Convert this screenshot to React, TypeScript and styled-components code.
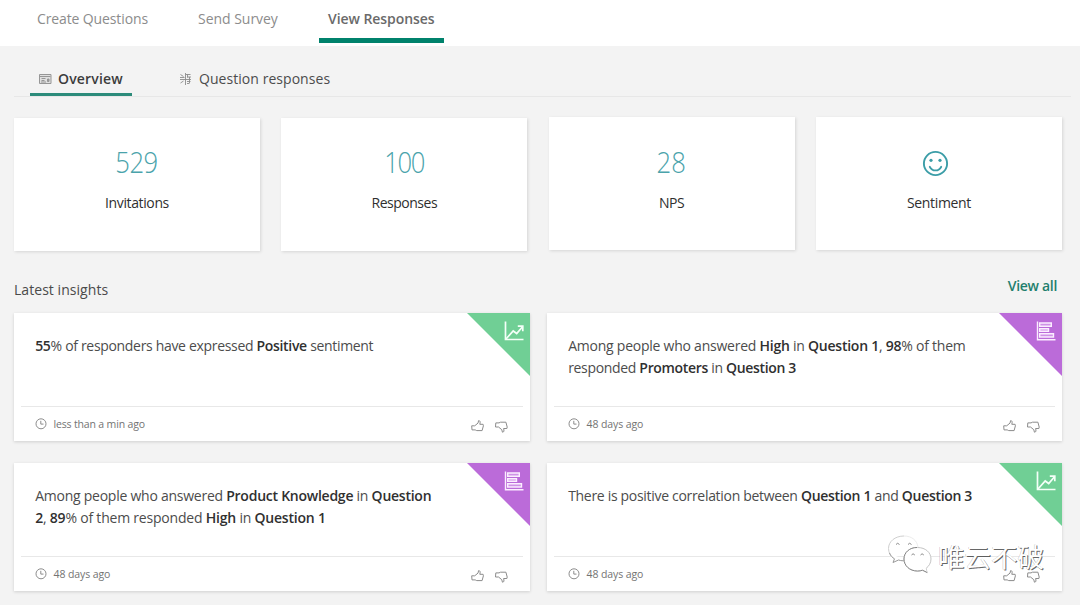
import React from "react";
import styled, { createGlobalStyle } from "styled-components";

const GlobalStyle = createGlobalStyle`
  * { box-sizing: border-box; }
  html, body { margin: 0; padding: 0; background: #f3f3f3; }
  body { font-family: "Open Sans", "Noto Sans", "Noto Sans CJK SC", sans-serif; color: #444; }
`;

const Page = styled.div`
  width: 1080px;
  height: 605px;
  overflow: hidden;
  background: #f3f3f3;
`;

const TopBar = styled.nav`
  display: flex;
  height: 46px;
  padding-left: 28px;
  gap: 32px;
  background: #fff;
`;

const TopTab = styled.div<{ $w: number; $ls: number; $active?: boolean }>`
  width: ${(p) => p.$w}px;
  height: 43px;
  padding: 8px 0 0 9px;
  white-space: nowrap;
  font-size: 14px;
  line-height: 22px;
  letter-spacing: ${(p) => p.$ls}px;
  font-weight: ${(p) => (p.$active ? 600 : 400)};
  color: ${(p) => (p.$active ? "#6a6a6a" : "#8c8c8c")};
  border-bottom: 5px solid ${(p) => (p.$active ? "#00826c" : "transparent")};
`;

const SubNav = styled.nav`
  display: flex;
  height: 51px;
  margin: 0 9px 0 14px;
  padding: 20px 0 0 16px;
  gap: 39px;
  border-bottom: 1px solid #e7e7e7;
`;

const SubTab = styled.div<{ $w: number; $ls: number; $active?: boolean }>`
  display: flex;
  align-items: flex-start;
  width: ${(p) => p.$w}px;
  height: 30px;
  padding: 2px 0 0 8px;
  white-space: nowrap;
  font-size: 14px;
  line-height: 22px;
  letter-spacing: ${(p) => p.$ls}px;
  font-weight: ${(p) => (p.$active ? 600 : 400)};
  color: ${(p) => (p.$active ? "#3c3c3c" : "#4c4c4c")};
  border-bottom: 3px solid ${(p) => (p.$active ? "#2c8b7a" : "transparent")};
  svg { flex: none; margin: 4px 6px 0 0; }
`;

const Stats = styled.section`
  display: grid;
  grid-template-columns: repeat(4, 246px);
  justify-content: space-between;
  width: 1048px;
  margin: 21px 0 0 14px;
`;

const StatCard = styled.div<{ $raised?: boolean }>`
  display: flex;
  flex-direction: column;
  align-items: center;
  height: 133px;
  margin-top: ${(p) => (p.$raised ? -1 : 0)}px;
  padding-top: ${(p) => (p.$raised ? 28 : 27)}px;
  background: #fff;
  box-shadow: 1px 1px 3px rgba(0, 0, 0, 0.12);
`;

const StatNumber = styled.div<{ $ls: number }>`
  height: 36px;
  font-size: 28.5px;
  line-height: 35px;
  font-weight: 300;
  letter-spacing: ${(p) => p.$ls}px;
  color: #4aa3ab;
  transform: scaleX(0.9);
`;

const StatIcon = styled.div`
  height: 36px;
  padding: 5px 7px 0 0;
  svg { display: block; }
`;

const StatLabel = styled.div<{ $ls: number }>`
  margin-top: 11px;
  font-size: 14px;
  line-height: 22px;
  letter-spacing: ${(p) => p.$ls}px;
  color: #2f2f2f;
`;

const InsightsHead = styled.div`
  display: flex;
  justify-content: space-between;
  align-items: flex-start;
  width: 1043px;
  height: 62px;
  margin-left: 14px;
  font-size: 14px;
  line-height: 22px;
`;

const Heading = styled.span`
  padding-top: 28px;
  letter-spacing: 0.05px;
  color: #4a4a4a;
`;

const ViewAll = styled.span`
  padding-top: 24px;
  font-weight: 600;
  letter-spacing: -0.3px;
  color: #1f7f6d;
`;

const Insights = styled.section`
  display: grid;
  grid-template-columns: 516px 515px;
  column-gap: 17px;
  row-gap: 22px;
  margin-left: 14px;
`;

const Card = styled.article`
  position: relative;
  display: flex;
  flex-direction: column;
  height: 128px;
  background: #fff;
  box-shadow: 0 1px 3px rgba(0, 0, 0, 0.15);
`;

const Message = styled.p`
  flex: 1;
  margin: 0;
  padding: 22px 0 0 21.2px;
  font-size: 14px;
  line-height: 22.4px;
  white-space: nowrap;
  color: #4c4c4c;
`;

const Line = styled.span<{ $ls: number }>`
  display: block;
  letter-spacing: ${(p) => p.$ls}px;
  b { font-weight: 600; color: #303030; }
`;

const Footer = styled.footer`
  display: flex;
  align-items: center;
  height: 35px;
  margin: 0 7px;
  padding: 0 14px 1px 14px;
  border-top: 1px solid #e8e8e8;
`;

const Age = styled.span<{ $ls: number }>`
  flex: 1;
  padding-left: 6.5px;
  font-size: 10.5px;
  line-height: 16px;
  letter-spacing: ${(p) => p.$ls}px;
  color: #737373;
`;

const Votes = styled.div`
  display: flex;
  gap: 10px;
  padding-top: 5px;
`;

const Corner = styled.div<{ $tone: string }>`
  position: absolute;
  top: 0;
  right: 0;
  width: 63px;
  height: 63px;
  padding: 8px 0 0 37px;
  background: ${(p) => p.$tone};
  clip-path: polygon(0 0, 100% 0, 100% 100%);
  svg { display: block; }
`;

const Watermark = styled.div`
  position: absolute;
  left: 887px;
  top: 533px;
  display: flex;
  align-items: flex-start;
`;

const WatermarkText = styled.span`
  margin-left: 5px;
  font-family: "Noto Sans CJK SC", sans-serif;
  font-size: 26.5px;
  line-height: 45px;
  font-weight: 400;
  color: #fff;
  text-shadow: 1px 1px 0.5px rgba(0, 0, 0, 0.6), -0.5px 0 0.5px rgba(0, 0, 0, 0.25);
`;

const OverviewIcon = () => (
  <svg width="14" height="14" viewBox="0 0 14 14" fill="none" stroke="#969696">
    <path d="M1.500 2.500h11.500v9H1.500z" fill="#e0e0e0" />
    <path d="M1.500 4.500h11M3.500 6.500h4M3.500 8.500h3M3 10h5" />
    <path d="M9.500 7h1.500v2.500H9.500z" fill="#999" />
  </svg>
);

const ResponsesIcon = () => (
  <svg width="14" height="14" viewBox="0 0 14 14" fill="none" stroke="#8c8c8c" strokeWidth=".9">
    <path d="M6.500 1v12M1.500 2.500l3 2M1 5.500h4.500M1 7.500h11M1.500 11l3-2M7 2.500h4.500M8 5h4M8 9.500h3.500M8 11.500h2.500M8.500 2.500v3M10.500 5v6" />
  </svg>
);

const Smile = () => (
  <svg width="27" height="27" viewBox="0 0 27 27" fill="none" stroke="#3b9da7" strokeWidth="1.900">
    <circle cx="13.500" cy="13.500" r="11.600" />
    <path d="M7.800 16.800a6.300 6.300 0 0 0 11.400 0" strokeLinecap="round" />
    <circle cx="9" cy="10.300" r="1.600" fill="#3b9da7" stroke="none" />
    <circle cx="18" cy="10.300" r="1.600" fill="#3b9da7" stroke="none" />
  </svg>
);

const TrendIcon = () => (
  <svg width="21" height="21" viewBox="0 0 21 21" fill="none" stroke="#f4fff8" strokeWidth="1.700">
    <path d="M1.500 .5v18h18" />
    <path d="M2 18l7.200-8 3.500 2.500L18.300 6M13.800 5.200h5v5" />
  </svg>
);

const BarsIcon = () => (
  <svg width="21" height="21" viewBox="0 0 21 21" fill="none" stroke="#fbeeff" strokeWidth="1.400">
    <path d="M1.500 .5v18.300h18" />
    <path d="M3.700 2h11.600v3.300H3.700zM3.700 7.700h8.800v2.600H3.700zM3.700 12.700h13.800v3.300H3.700z" fill="#cf93e6" />
  </svg>
);

const Clock = () => (
  <svg width="12" height="12" viewBox="0 0 12 12" fill="none" stroke="#8c8c8c">
    <circle cx="6" cy="5.800" r="5" />
    <path d="M5.800 2.800v3.300h2.700" />
  </svg>
);

const Thumb = ({ down }: { down?: boolean }) => (
  <svg width="14" height="14" viewBox="0 0 14 14" fill="none" stroke="#8c8c8c" strokeLinejoin="round">
    <path
      transform={down ? "translate(-.5 14.500) scale(1 -1)" : "translate(-.3 .3)"}
      d="M1 6.500h3l3.300-2.700.6-2.500c1.600 0 1.900 1.400 1.200 3.700h3.300l.3 1.500-1.300 4.800H6l-1.500-.7H1.300z"
    />
  </svg>
);

const WeChat = () => (
  <svg width="46" height="42" viewBox="0 0 46 42" fill="#fff" strokeWidth="1">
    <path d="M17 3C8 3 1.500 8.500 1.500 15.500c0 4.500 2.300 7.500 5.500 9.800" stroke="#cfcfcf" />
    <path d="M17 3c8 0 13 4.500 14 11" stroke="#ececec" />
    <path d="M2.500 20c1.200 3 3 4.500 5 5.800L6 29.500l5.500-2.500c2.500.8 4.500.9 7 .6" stroke="#999" />
    <path d="M30.500 14.500C22.500 14.500 17 19.500 17 26c0 6.500 5.500 12 13.500 12 2 0 3.500-.3 5-.8l4.700 2.300-1.200-4C42 33 44 30 44 26c0-6.500-5.500-11.500-13.500-11.500z" stroke="#c4c4c4" />
    <path d="M30 14.500C22.500 14.500 17 19.500 17 26c0 6.500 5.500 12 13.500 12 2 0 3.500-.3 5-.8l4.700 2.300" stroke="#858585" />
    <path d="M9 11.500q1.500-2.500 3.500 0M21 11.500q1.500-2.500 3.500 0M24.500 22q1.500-2.500 3.300 0M33.500 22q1.500-2.500 3.300 0" fill="none" stroke="#8a8a8a" />
  </svg>
);

type InsightProps = { kind: "trend" | "bars"; age: string; ageSpacing: number; children: React.ReactNode };

const Insight = ({ kind, age, ageSpacing, children }: InsightProps) => (
  <Card>
    <Message>{children}</Message>
    <Footer>
      <Clock />
      <Age $ls={ageSpacing}>{age}</Age>
      <Votes><Thumb /><Thumb down /></Votes>
    </Footer>
    <Corner $tone={kind === "trend" ? "#70cf95" : "#bb6bd9"}>
      {kind === "trend" ? <TrendIcon /> : <BarsIcon />}
    </Corner>
  </Card>
);

export default function App() {
  return (
    <Page>
      <GlobalStyle />
      <TopBar>
        <TopTab $w={129} $ls={-0.12}>Create Questions</TopTab>
        <TopTab $w={98} $ls={-0.03}>Send Survey</TopTab>
        <TopTab $w={125} $ls={-0.06} $active>View Responses</TopTab>
      </TopBar>
      <SubNav>
        <SubTab $w={102} $ls={0.17} $active><OverviewIcon />Overview</SubTab>
        <SubTab $w={180} $ls={0.05}><ResponsesIcon />Question responses</SubTab>
      </SubNav>
      <Stats>
        <StatCard><StatNumber $ls={-0.6}>529</StatNumber><StatLabel $ls={-0.38}>Invitations</StatLabel></StatCard>
        <StatCard><StatNumber $ls={-1.5}>100</StatNumber><StatLabel $ls={-0.48}>Responses</StatLabel></StatCard>
        <StatCard $raised><StatNumber $ls={-0.1}>28</StatNumber><StatLabel $ls={-0.4}>NPS</StatLabel></StatCard>
        <StatCard $raised><StatIcon><Smile /></StatIcon><StatLabel $ls={-0.35}>Sentiment</StatLabel></StatCard>
      </Stats>
      <InsightsHead>
        <Heading>Latest insights</Heading>
        <ViewAll>View all</ViewAll>
      </InsightsHead>
      <Insights>
        <Insight kind="trend" age="less than a min ago" ageSpacing={-0.16}>
          <Line $ls={-0.32}><b>55</b>% of responders have expressed <b>Positive</b> sentiment</Line>
        </Insight>
        <Insight kind="bars" age="48 days ago" ageSpacing={-0.1}>
          <Line $ls={-0.24}>Among people who answered <b>High</b> in <b>Question 1</b>, <b>98</b>% of them</Line>
          <Line $ls={-0.33}>responded <b>Promoters</b> in <b>Question 3</b></Line>
        </Insight>
        <Insight kind="bars" age="48 days ago" ageSpacing={-0.1}>
          <Line $ls={-0.25}>Among people who answered <b>Product Knowledge</b> in <b>Question</b></Line>
          <Line $ls={-0.21}><b>2</b>, <b>89</b>% of them responded <b>High</b> in <b>Question 1</b></Line>
        </Insight>
        <Insight kind="trend" age="48 days ago" ageSpacing={-0.1}>
          <Line $ls={-0.31}>There is positive correlation between <b>Question 1</b> and <b>Question 3</b></Line>
        </Insight>
      </Insights>
      <Watermark><WeChat /><WatermarkText>唯云不破</WatermarkText></Watermark>
    </Page>
  );
}
